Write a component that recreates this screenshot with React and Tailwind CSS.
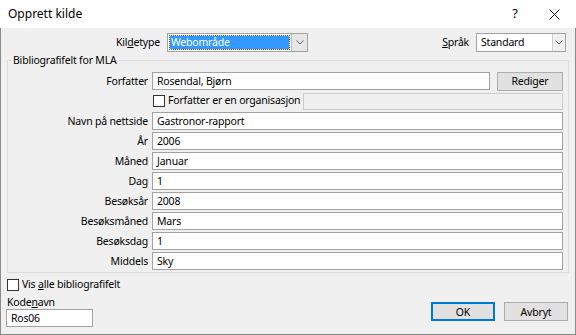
import React from 'react';

const font = { fontFamily: '"Segoe UI", "Noto Sans", "Open Sans", sans-serif' };

const Chevron = () => (
  <svg width="8" height="5" viewBox="0 0 8 5" className="block">
    <path d="M0.5 0.5 L4 4 L7.5 0.5" fill="none" stroke="#606060" strokeWidth="1" />
  </svg>
);

const Field = ({ label, value }) => (
  <div className="flex items-center h-[18px]">
    <div className="w-[140px] text-right leading-[18px]">{label}</div>
    <div className="ml-[4px] flex-1 h-[18px] bg-white border border-[#a2a2a2] px-[4px] leading-[16px]">{value}</div>
  </div>
);

const Button = ({ children, primary, className = '' }) => (
  <div
    className={
      'h-[19px] flex items-center justify-center bg-[#e1e1e1] border leading-[16px] ' +
      (primary ? 'border-[#0078d7] shadow-[inset_0_0_0_1px_#0078d7] ' : 'border-[#adadad] ') +
      className
    }
  >
    {children}
  </div>
);

const Checkbox = () => (
  <div className="w-[12px] h-[12px] border border-[#333] bg-white shrink-0"></div>
);

export default function App() {
  const fields = [
    ['Navn på nettside', 'Gastronor-rapport'],
    ['År', '2006'],
    ['Måned', 'Januar'],
    ['Dag', '1'],
    ['Besøksår', '2008'],
    ['Besøksmåned', 'Mars'],
    ['Besøksdag', '1'],
    ['Middels', 'Sky'],
  ];

  return (
    <div className="w-[576px] h-[335px] flex flex-col text-[10.5px] tracking-[-0.2px] text-black bg-[#f0f0f0]" style={font}>
      {/* title bar */}
      <div className="h-[28px] bg-white flex items-center shrink-0 tracking-normal">
        <div className="pl-[8px] flex-1 text-[12px]">Opprett kilde</div>
        <div className="w-[12px] text-center mr-[28px] text-[13px]">?</div>
        <svg width="11" height="11" viewBox="0 0 11 11" className="mr-[16px]">
          <path d="M0.5 0.5 L10.5 10.5 M10.5 0.5 L0.5 10.5" stroke="#111" strokeWidth="1" />
        </svg>
      </div>

      {/* body */}
      <div className="flex-1 flex flex-col border-x border-b border-[#8a8a8a] px-[6px]">
        {/* kildetype / språk */}
        <div className="flex items-center mt-[5px] h-[19px]">
          <div className="w-[153px] text-right">
            Kil<span className="underline">d</span>etype
          </div>
          <div className="ml-[7px] w-[141px] h-[19px] flex border border-[#a2a2a2] bg-white">
            <div className="flex-1 m-[2px] bg-[#3399ff] text-white leading-[13px] px-[1px] outline-1 outline-dotted outline-[#555]">
              Webområde
            </div>
            <div className="w-[16px] flex items-center justify-center bg-[#e6e6e6] border-l border-[#bcbcbc]">
              <Chevron />
            </div>
          </div>
          <div className="flex-1"></div>
          <div>
            <span className="underline">S</span>pråk
          </div>
          <div className="ml-[7px] mr-[3px] w-[90px] h-[19px] flex border border-[#a2a2a2] bg-white">
            <div className="flex-1 px-[4px] leading-[17px]">Standard</div>
            <div className="w-[13px] flex items-center justify-center bg-[#f0f0f0] border-l border-[#cfcfcf]">
              <Chevron />
            </div>
          </div>
        </div>

        {/* group box */}
        <fieldset className="border border-[#dcdcdc] px-0 pt-[4px] pb-[2px] mx-0">
          <legend className="ml-[3px] px-[2px] leading-[16px]">Bibliografifelt for MLA</legend>
          <div className="flex flex-col gap-[2px] pr-[5px]">
            <div className="flex items-center h-[18px]">
              <div className="w-[140px] text-right leading-[18px]">Forfatter</div>
              <div className="ml-[4px] w-[338px] h-[18px] bg-white border border-[#a2a2a2] px-[4px] leading-[16px]">
                Rosendal, Bjørn
              </div>
              <Button className="ml-[7px] flex-1">Rediger</Button>
            </div>
            <div className="flex items-center h-[18px]">
              <div className="ml-[145px] w-[150px] flex items-center shrink-0">
                <Checkbox />
                <span className="ml-[3px] whitespace-nowrap">Forfatter er en organisasjon</span>
              </div>
              <div className="flex-1 h-[17px] bg-[#f0f0f0] border border-[#cccccc]"></div>
            </div>
            {fields.map(([l, v]) => (
              <Field key={l} label={l} value={v} />
            ))}
          </div>
        </fieldset>

        {/* bottom */}
        <div className="flex items-end">
          <div className="flex flex-col">
            <div className="flex items-center h-[16px] mt-[4px]">
              <Checkbox />
              <span className="ml-[3px]">
                Vis <span className="underline">a</span>lle bibliografifelt
              </span>
            </div>
            <div className="leading-[14px] mt-[2px]">
              Kode<span className="underline">n</span>avn
            </div>
            <div className="w-[87px] h-[18px] -ml-[1px] bg-white border border-[#a2a2a2] px-[4px] leading-[16px]">
              Ros06
            </div>
          </div>
          <div className="flex-1"></div>
          <div className="flex gap-[9px] mb-[6px] mr-[1px]">
            <Button primary className="w-[64px]">OK</Button>
            <Button className="w-[64px]">Avbryt</Button>
          </div>
        </div>
      </div>
    </div>
  );
}
